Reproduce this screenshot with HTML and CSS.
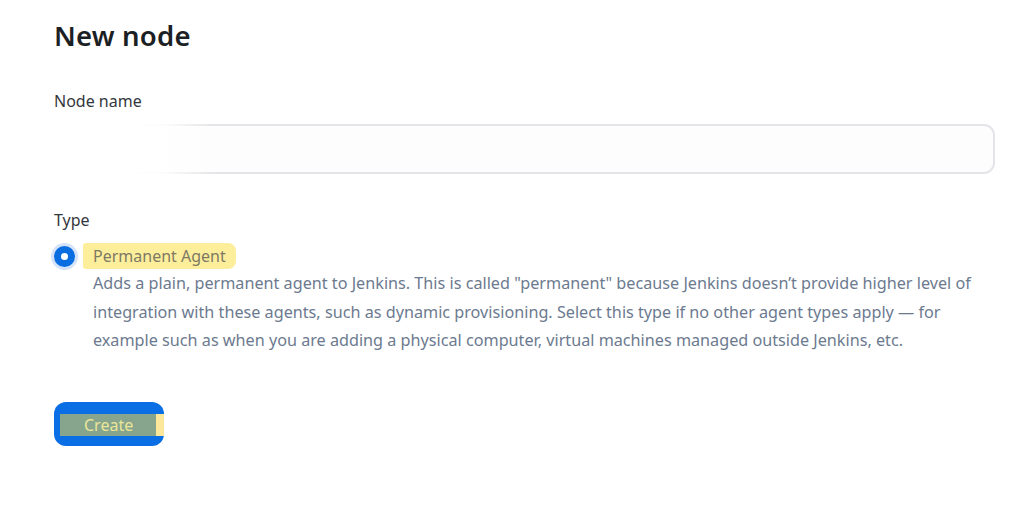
FILE: index.html
```html
<!DOCTYPE html>
<html>
<head>
<meta charset="utf-8">
<link rel="stylesheet" href="styles.css">
</head>
<body>
<main class="page">
  <h1 class="title">New node</h1>
  <div class="field">
    <label class="label">Node name</label>
    <div class="input-wrap">
      <div class="input"></div>
      <div class="redact"></div>
    </div>
  </div>
  <div class="field type-field">
    <div class="label">Type</div>
    <div class="option">
      <span class="radio"><span class="dot"></span></span>
      <span class="option-name">Permanent Agent</span>
    </div>
    <p class="desc">Adds a plain, permanent agent to Jenkins. This is called "permanent" because Jenkins doesn’t provide higher level of<br>integration with these agents, such as dynamic provisioning. Select this type if no other agent types apply — for<br>example such as when you are adding a physical computer, virtual machines managed outside Jenkins, etc.</p>
  </div>
  <div class="actions">
    <button class="btn"><span class="btn-hl">Create</span></button>
  </div>
</main>
</body>
</html>
```
FILE: styles.css
```css
html, body {
  margin: 0;
  padding: 0;
  background: #ffffff;
}
body {
  font-family: "Noto Sans", "Open Sans", sans-serif;
  color: #1f2329;
}
.page {
  padding: 18px 29px 0 54px;
  width: 941px;
}
.title {
  margin: 0;
  font-size: 27.5px;
  font-weight: 600;
  line-height: 36px;
  color: #1c1f24;
  letter-spacing: 0.2px;
}
.field {
  margin-top: 37px;
}
.label {
  display: block;
  font-size: 16px;
  line-height: 20px;
  color: #33373d;
}
.input-wrap {
  position: relative;
  margin-top: 13px;
}
.input {
  height: 46px;
  border: 2px solid #e3e5e8;
  border-radius: 11px;
  background: #fdfdfd;
}
.redact {
  position: absolute;
  left: -10px;
  top: -8px;
  width: 170px;
  height: 64px;
  background: linear-gradient(90deg, #ffffff 0%, #ffffff 45%, rgba(255,255,255,0.9) 70%, rgba(255,255,255,0) 100%);
}
.type-field {
  margin-top: 36px;
}
.option {
  display: flex;
  align-items: center;
  margin-top: 13px;
}
.radio {
  flex: none;
  width: 21px;
  height: 21px;
  border-radius: 50%;
  background: #0b6ee0;
  box-shadow: 0 0 0 3px #d4e3f8;
  display: flex;
  align-items: center;
  justify-content: center;
}
.dot {
  width: 7px;
  height: 7px;
  border-radius: 50%;
  background: #ffffff;
}
.option-name {
  margin-left: 8px;
  padding: 0 10px 0 10px;
  font-size: 16px;
  line-height: 26px;
  color: #7d7a64;
  background: #fdee9c;
  border-radius: 3px 8px 8px 3px;
}
.desc {
  margin: 0 0 0 39px;
  font-size: 16.2px;
  line-height: 28.5px;
  color: #6c7a8f;
  white-space: nowrap;
}
.actions {
  margin-top: 47px;
}
.btn {
  display: flex;
  align-items: center;
  width: 110px;
  height: 44px;
  padding: 0 0 0 6px;
  border: 0;
  border-radius: 12px;
  background: #0a6fe5;
  font-family: inherit;
}
.btn-hl {
  display: block;
  width: 110px;
  height: 22px;
  line-height: 22px;
  text-align: left;
  padding-left: 24px;
  box-sizing: border-box;
  background: linear-gradient(90deg, #86a58c 0%, #86a58c 92%, #fde79a 92%);
  color: #ece59a;
  font-size: 16px;
  margin-top: 2px;
}
```
